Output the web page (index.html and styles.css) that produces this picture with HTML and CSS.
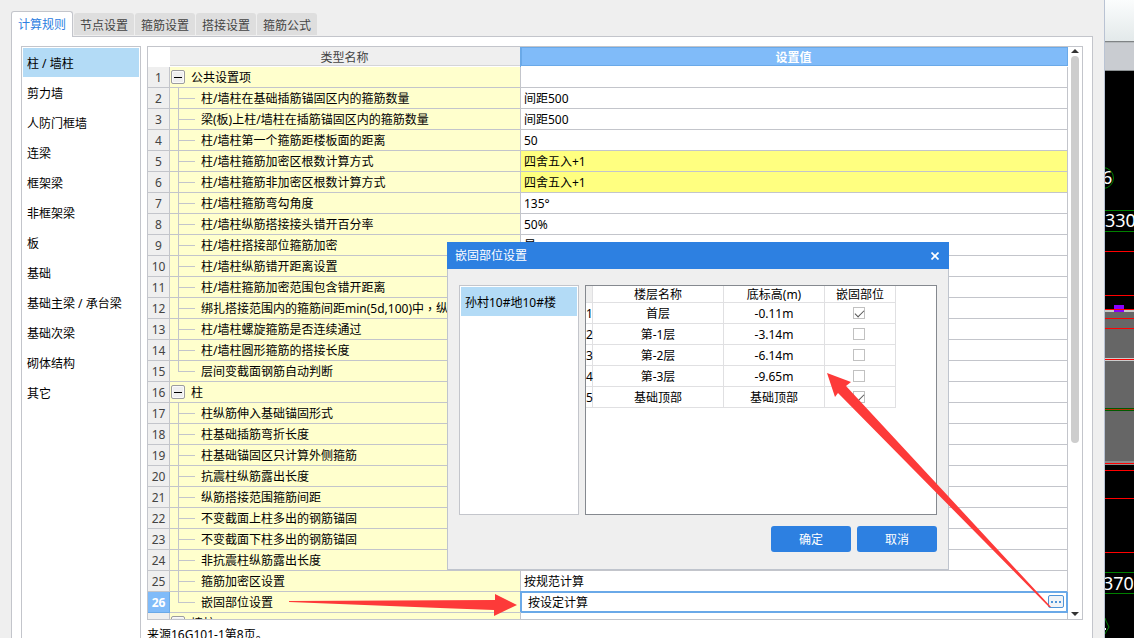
FILE: index.html
```html
<!DOCTYPE html>
<html lang="zh-CN">
<head>
<meta charset="utf-8">
<title>计算规则</title>
<link rel="stylesheet" href="styles.css">
</head>
<body>
<div class="app">
  <main class="window">
    <div class="tabs" role="tablist">
      <button class="tab active" role="tab" aria-selected="true">计算规则</button>
      <button class="tab" role="tab">节点设置</button>
      <button class="tab" role="tab">箍筋设置</button>
      <button class="tab" role="tab">搭接设置</button>
      <button class="tab" role="tab">箍筋公式</button>
    </div>
    <div class="panel">
      <nav class="sidebar">
        <button class="side-item selected">柱 / 墙柱</button>
        <button class="side-item">剪力墙</button>
        <button class="side-item">人防门框墙</button>
        <button class="side-item">连梁</button>
        <button class="side-item">框架梁</button>
        <button class="side-item">非框架梁</button>
        <button class="side-item">板</button>
        <button class="side-item">基础</button>
        <button class="side-item">基础主梁 / 承台梁</button>
        <button class="side-item">基础次梁</button>
        <button class="side-item">砌体结构</button>
        <button class="side-item">其它</button>
      </nav>
      <section class="content">
        <div class="frame">
          <div class="viewport">
            <table class="rules">
              <colgroup><col class="col-num"><col class="col-name"><col></colgroup>
              <thead>
                <tr><td class="corner"></td><th scope="col" class="head-name">类型名称</th><th scope="col" class="head-value">设置值</th></tr>
              </thead>
              <tbody>
                <tr><th scope="row">1</th><td class="name"><div class="node"><button class="toggle" aria-label="折叠"></button>公共设置项</div></td><td></td></tr>
                <tr><th scope="row">2</th><td class="name"><div class="node"><span class="branch"></span>柱/墙柱在基础插筋锚固区内的箍筋数量</div></td><td>间距500</td></tr>
                <tr><th scope="row">3</th><td class="name"><div class="node"><span class="branch"></span>梁(板)上柱/墙柱在插筋锚固区内的箍筋数量</div></td><td>间距500</td></tr>
                <tr><th scope="row">4</th><td class="name"><div class="node"><span class="branch"></span>柱/墙柱第一个箍筋距楼板面的距离</div></td><td>50</td></tr>
                <tr class="changed"><th scope="row">5</th><td class="name"><div class="node"><span class="branch"></span>柱/墙柱箍筋加密区根数计算方式</div></td><td>四舍五入+1</td></tr>
                <tr class="changed"><th scope="row">6</th><td class="name"><div class="node"><span class="branch"></span>柱/墙柱箍筋非加密区根数计算方式</div></td><td>四舍五入+1</td></tr>
                <tr><th scope="row">7</th><td class="name"><div class="node"><span class="branch"></span>柱/墙柱箍筋弯勾角度</div></td><td>135°</td></tr>
                <tr><th scope="row">8</th><td class="name"><div class="node"><span class="branch"></span>柱/墙柱纵筋搭接接头错开百分率</div></td><td>50%</td></tr>
                <tr><th scope="row">9</th><td class="name"><div class="node"><span class="branch"></span>柱/墙柱搭接部位箍筋加密</div></td><td>是</td></tr>
                <tr><th scope="row">10</th><td class="name"><div class="node"><span class="branch"></span>柱/墙柱纵筋错开距离设置</div></td><td></td></tr>
                <tr><th scope="row">11</th><td class="name"><div class="node"><span class="branch"></span>柱/墙柱箍筋加密范围包含错开距离</div></td><td></td></tr>
                <tr><th scope="row">12</th><td class="name"><div class="node"><span class="branch"></span>绑扎搭接范围内的箍筋间距min(5d,100)中<span class="comma">，</span>纵</div></td><td></td></tr>
                <tr><th scope="row">13</th><td class="name"><div class="node"><span class="branch"></span>柱/墙柱螺旋箍筋是否连续通过</div></td><td></td></tr>
                <tr><th scope="row">14</th><td class="name"><div class="node"><span class="branch"></span>柱/墙柱圆形箍筋的搭接长度</div></td><td></td></tr>
                <tr><th scope="row">15</th><td class="name"><div class="node"><span class="branch last"></span>层间变截面钢筋自动判断</div></td><td></td></tr>
                <tr><th scope="row">16</th><td class="name"><div class="node"><button class="toggle" aria-label="折叠"></button>柱</div></td><td></td></tr>
                <tr><th scope="row">17</th><td class="name"><div class="node"><span class="branch"></span>柱纵筋伸入基础锚固形式</div></td><td></td></tr>
                <tr><th scope="row">18</th><td class="name"><div class="node"><span class="branch"></span>柱基础插筋弯折长度</div></td><td></td></tr>
                <tr><th scope="row">19</th><td class="name"><div class="node"><span class="branch"></span>柱基础锚固区只计算外侧箍筋</div></td><td></td></tr>
                <tr><th scope="row">20</th><td class="name"><div class="node"><span class="branch"></span>抗震柱纵筋露出长度</div></td><td></td></tr>
                <tr><th scope="row">21</th><td class="name"><div class="node"><span class="branch"></span>纵筋搭接范围箍筋间距</div></td><td></td></tr>
                <tr><th scope="row">22</th><td class="name"><div class="node"><span class="branch"></span>不变截面上柱多出的钢筋锚固</div></td><td></td></tr>
                <tr><th scope="row">23</th><td class="name"><div class="node"><span class="branch"></span>不变截面下柱多出的钢筋锚固</div></td><td></td></tr>
                <tr><th scope="row">24</th><td class="name"><div class="node"><span class="branch"></span>非抗震柱纵筋露出长度</div></td><td></td></tr>
                <tr><th scope="row">25</th><td class="name"><div class="node"><span class="branch"></span>箍筋加密区设置</div></td><td>按规范计算</td></tr>
                <tr class="current"><th scope="row">26</th><td class="name"><div class="node"><span class="branch last"></span><label for="fix-part">嵌固部位设置</label></div></td><td class="editing"><div class="editor"><input id="fix-part" type="text" value="按设定计算"><button class="more" aria-label="更多"><svg width="12" height="2" viewBox="0 0 12 2"><path d="M1 0h2v2H1zM5 0h2v2H5zM9 0h2v2H9z" fill="#4f94d8"/></svg></button></div></td></tr>
                <tr><th scope="row"></th><td class="name"><div class="node"><button class="toggle" aria-label="折叠"></button>墙柱</div></td><td></td></tr>
              </tbody>
            </table>
          </div>
          <div class="scrollbar">
            <svg width="8" height="4" viewBox="0 0 8 4"><path d="M0 4L4 0l4 4z" fill="#333"/></svg>
            <div class="track"><div class="thumb"></div></div>
            <svg width="8" height="4" viewBox="0 0 8 4"><path d="M0 0l4 4 4-4z" fill="#333"/></svg>
          </div>
        </div>
        <p class="note">来源16G101-1第8页。</p>
      </section>
    </div>
  </main>

  <aside class="drawing">
    <svg width="29" height="638" viewBox="0 0 29 638">
      <defs><linearGradient id="bar" x1="0" y1="0" x2="0" y2="1"><stop offset="0" stop-color="#fbfdfd"/><stop offset="1" stop-color="#e3e9ea"/></linearGradient></defs>
      <rect width="29" height="41" fill="url(#bar)"/>
      <rect y="41" width="29" height="1" fill="#7f8385"/>
      <rect y="42" width="29" height="28" fill="#c9ccd1"/>
      <rect y="42" width="29" height="1" fill="#b5b9bc"/>
      <rect y="70" width="29" height="1" fill="#8b9092"/>
      <rect y="310" width="29" height="2" fill="#c8c8c8"/>
      <rect y="312" width="29" height="149" fill="#666"/>
      <rect y="358" width="29" height="3" fill="#ccc"/>
      <rect y="408" width="29" height="3" fill="#005a00"/>
      <rect y="461" width="29" height="4" fill="#8c8c8c"/>
      <rect x="9" y="305" width="10" height="7" fill="#80f"/>
      <path d="M0 251.5h29M0 295.5h29M0 309.5h29M0 318.5h29M0 328.5h29M0 359.5h29M0 463.5h29M0 470.5h29M0 498.5h29M0 552.5h29" stroke="#f00"/>
      <path d="M0 409.5h29" stroke="#b43200"/>
      <path d="M0 210.5h29M0 231.5h29M0 572.5h29M0 593.5h29" stroke="#008000"/>
      <circle cx="-2" cy="178" r="10.5" fill="none" stroke="#008000"/>
      <path d="M0 618l1 3 3 6-3 5-1 2" fill="none" stroke="#008000"/>
      <rect y="628" width="1" height="2" fill="#fff"/>
      <g class="cad-text"><text x="-3" y="184">6</text><text x="0" y="227">330</text><text x="-2" y="590">3700</text></g>
    </svg>
  </aside>

  <div class="dialog" role="dialog" aria-labelledby="dialog-title">
    <header class="titlebar">
      <span id="dialog-title">嵌固部位设置</span>
      <button class="close" aria-label="关闭"><svg width="8" height="8" viewBox="0 0 8 8"><path d="M.5.5l7 7M7.5.5l-7 7" stroke="#fff" stroke-width="1.7"/></svg></button>
    </header>
    <div class="dialog-body">
      <div class="lists">
        <div class="buildings"><button class="side-item selected">孙村10#地10#楼</button></div>
        <div class="floors-box">
          <table class="floors">
            <colgroup><col class="fc-num"><col class="fc-name"><col class="fc-level"><col class="fc-check"></colgroup>
            <thead><tr><td class="floor-corner"></td><th scope="col">楼层名称</th><th scope="col">底标高(m)</th><th scope="col">嵌固部位</th></tr></thead>
            <tbody>
              <tr><th scope="row">1</th><td>首层</td><td>-0.11m</td><td class="check"><input type="checkbox" aria-label="首层" checked></td></tr>
              <tr><th scope="row">2</th><td>第-1层</td><td>-3.14m</td><td class="check"><input type="checkbox" aria-label="第-1层"></td></tr>
              <tr><th scope="row">3</th><td>第-2层</td><td>-6.14m</td><td class="check"><input type="checkbox" aria-label="第-2层"></td></tr>
              <tr><th scope="row">4</th><td>第-3层</td><td>-9.65m</td><td class="check"><input type="checkbox" aria-label="第-3层"></td></tr>
              <tr><th scope="row">5</th><td>基础顶部</td><td>基础顶部</td><td class="check"><input type="checkbox" aria-label="基础顶部" checked></td></tr>
            </tbody>
          </table>
        </div>
      </div>
      <div class="actions"><button class="primary">确定</button><button class="primary">取消</button></div>
    </div>
  </div>

  <svg class="arrows" width="1134" height="638" viewBox="0 0 1134 638" aria-hidden="true">
    <path d="M289 601L495 600V594L517 605L494 616V610L440 608L289 602Z" fill="#fd3a39"/>
    <path d="M827 373L851 382L846 386L1051 607H1049L838 393L835 397Z" fill="#fd3a39"/>
  </svg>
</div>
</body>
</html>
```

FILE: styles.css
```css
* {
  box-sizing: border-box;
}

body {
  margin: 0;
  overflow: hidden;
  font: 12px/16px "Noto Sans", "Noto Sans CJK SC", sans-serif;
  color: #000;
  background: #efefef;
}

button,
input {
  margin: 0;
  padding: 0;
  border: 0;
  font: inherit;
  color: inherit;
  background: none;
}

.app {
  position: relative;
  display: grid;
  grid-template-columns: minmax(0, 1fr) 30px;
  height: 100vh;
  overflow: hidden;
}

.window {
  display: flex;
  flex-direction: column;
  min-height: 0;
  padding: 11px 11px 0;
}

/* Tabs */
.tabs {
  display: flex;
  align-items: flex-end;
  gap: 1px;
}

.tab {
  width: 60px;
  height: 22px;
  margin-bottom: 1px;
  padding-top: 3px;
  border-radius: 3px 3px 0 0;
  color: #444;
  background: #dedede;
}

.tab.active {
  position: relative;
  width: 62px;
  height: 26px;
  margin-bottom: -1px;
  padding-top: 1px;
  border: 1px solid #c3c5cb;
  border-bottom: 0;
  color: #2d80e1;
  background: #fff;
}

.panel {
  display: flex;
  flex: 1;
  gap: 6px;
  min-height: 0;
  padding: 9px 9px 0;
  border: 1px solid #c3c5cb;
  border-bottom: 0;
  background: #fff;
}

.sidebar {
  display: flex;
  flex-direction: column;
  gap: 1px;
  width: 120px;
  padding: 1px;
  border: 1px solid #c3c5cb;
  border-bottom: 0;
}

.side-item {
  width: 100%;
  height: 29px;
  padding: 3px 4px 0;
  text-align: left;
  white-space: nowrap;
}

.side-item.selected {
  background: #b3dbf6;
}

.content {
  display: flex;
  flex: 1;
  flex-direction: column;
  min-width: 0;
}

.frame {
  display: flex;
  flex: 1;
  min-height: 0;
  border: 1px solid #c3c5cb;
}

.viewport {
  flex: 1;
  min-width: 0;
  overflow: hidden;
}

.note {
  flex: none;
  height: 18px;
  margin: 0;
  padding-top: 7px;
}

/* Rule table */
table {
  border-spacing: 0;
  table-layout: fixed;
}

.rules {
  width: 100%;
}

.col-num {
  width: 22px;
}

.col-name {
  width: 351px;
}

.rules td,
.rules th {
  height: 21px;
  padding: 2px 3px 0;
  border: solid #c3c5cb;
  border-width: 0 1px 1px 0;
  white-space: nowrap;
}

.rules tbody th {
  padding: 2px 0 0;
  font-weight: 400;
  color: #444;
  background: #efefef;
}

.rules thead td,
.rules thead th {
  height: 20px;
  padding: 2px 0 0;
  font-weight: 400;
  color: #444;
}

.rules thead .corner {
  border-color: #fff;
}

.rules thead .head-name {
  padding-right: 2px;
  border-width: 0 0 1px;
  border-color: #fff;
  background: #efefef;
  box-shadow: inset 0 -1px #d5d5d8;
}

.rules thead .head-value {
  padding-right: 2px;
  border-width: 0 0 1px;
  border-color: #fff;
  font-weight: 700;
  color: #fff;
  background: #80bbf9;
  box-shadow: inset 0 0 0 1px #6aa9e8, -1px 0 #6aa9e8;
}

.rules .name {
  padding: 0;
  background: #ffffcd;
}

.changed td {
  background: #ffff80;
}

.node {
  display: flex;
  align-items: flex-start;
  height: 20px;
  padding-top: 1px;
  line-height: 20px;
}

.comma {
  font-family: "Noto Sans CJK TC", sans-serif;
}

.branch {
  flex: none;
  width: 31px;
  height: 20px;
  margin-top: -1px;
  background: linear-gradient(#c3c5cb, #c3c5cb) 8px 0 / 1px 100% no-repeat, linear-gradient(#c3c5cb, #c3c5cb) 8px 10px / 17px 1px no-repeat;
}

.branch.last {
  background-size: 1px 10px, 17px 1px;
}

.toggle {
  flex: none;
  width: 14px;
  height: 14px;
  margin: 2px 6px 0 1px;
  border: 1px solid #9c9c9f;
  border-radius: 2px;
  background: linear-gradient(#000, #000) center / 8px 1px no-repeat, #efefef;
  box-shadow: inset 0 0 0 1px #fafafa;
}

.rules .current th {
  border-color: #6aa9e8;
  font-weight: 700;
  color: #fff;
  background: #80bbf9;
}

.rules .editing {
  padding: 0 3px 0 7px;
  border-color: #6aa9e8;
  box-shadow: -1px -1px #6aa9e8, inset 0 0 0 1px #6aa9e8;
}

.editor {
  display: flex;
  align-items: flex-start;
  height: 20px;
  padding-top: 3px;
}

.editor input {
  flex: 1;
  min-width: 0;
  height: 16px;
  outline: 0;
}

.more {
  display: grid;
  place-items: center;
  width: 16px;
  height: 13px;
  border: 1px solid #4f94d8;
  border-radius: 2px;
  background: #f0f3f7;
}

.scrollbar {
  display: flex;
  flex-direction: column;
  align-items: center;
  width: 14px;
  padding: 2px 0 3px;
}

.track {
  display: flex;
  flex: 1;
  width: 8px;
  padding: 3px 0;
}

.thumb {
  width: 8px;
  height: 70%;
  border-radius: 4px;
  background: #cdcdcd;
}

.drawing {
  overflow: hidden;
  border-left: 1px solid #b9c3d3;
  background: #000;
}

.drawing svg {
  display: block;
}

.cad-text {
  font-size: 18px;
  fill: #fff;
}

/* Dialog floating above the table */
.dialog {
  position: absolute;
  top: 242px;
  left: 447px;
  width: 502px;
}

.titlebar {
  display: flex;
  align-items: center;
  justify-content: space-between;
  height: 27px;
  padding: 0 8px;
  color: #fff;
  background: #2d80e1;
}

.close {
  display: grid;
  place-items: center;
  width: 12px;
  height: 16px;
}

.dialog-body {
  padding: 16px 11px 17px;
  border: 1px solid #bfc4cd;
  border-top: 0;
  background: #efefef;
}

.lists {
  display: flex;
  gap: 6px;
  height: 230px;
}

.buildings {
  width: 120px;
  padding: 1px;
  border: 1px solid #c3c5cb;
  background: #fff;
}

.floors-box {
  flex: 1;
  border: 1px solid #85898f;
  background: #fff;
}

.floors {
  width: 310px;
}

.fc-num {
  width: 7px;
}

.fc-name {
  width: 131px;
}

.fc-level {
  width: 101px;
}

.fc-check {
  width: 71px;
}

.floors td,
.floors th {
  height: 21px;
  padding: 2px 0 0;
  border: solid #e0e0e2;
  border-width: 0 1px 1px 0;
  font-weight: 400;
  text-align: center;
  white-space: nowrap;
}

.floors thead td,
.floors thead th {
  height: 17px;
  line-height: 14px;
}

.floors .floor-corner {
  background: #efefef;
}

.floors .check {
  padding: 0 2px 0 0;
}

.floors input {
  display: block;
  width: 12px;
  height: 12px;
  margin: 0 auto;
  appearance: none;
  border: 1px solid #c1c1c1;
  background: #fff;
}

.floors input:checked::before {
  content: "";
  display: block;
  width: 8px;
  height: 4px;
  margin: 2px 0 0 1px;
  border: solid #555;
  border-width: 0 0 1px 1px;
  transform: rotate(-45deg);
}

.actions {
  display: flex;
  justify-content: flex-end;
  gap: 6px;
  margin-top: 11px;
}

.primary {
  width: 80px;
  height: 26px;
  padding-top: 2px;
  border-radius: 3px;
  color: #fff;
  background: #2d80e1;
}

.arrows {
  position: absolute;
  top: 0;
  left: 0;
  pointer-events: none;
}
```
